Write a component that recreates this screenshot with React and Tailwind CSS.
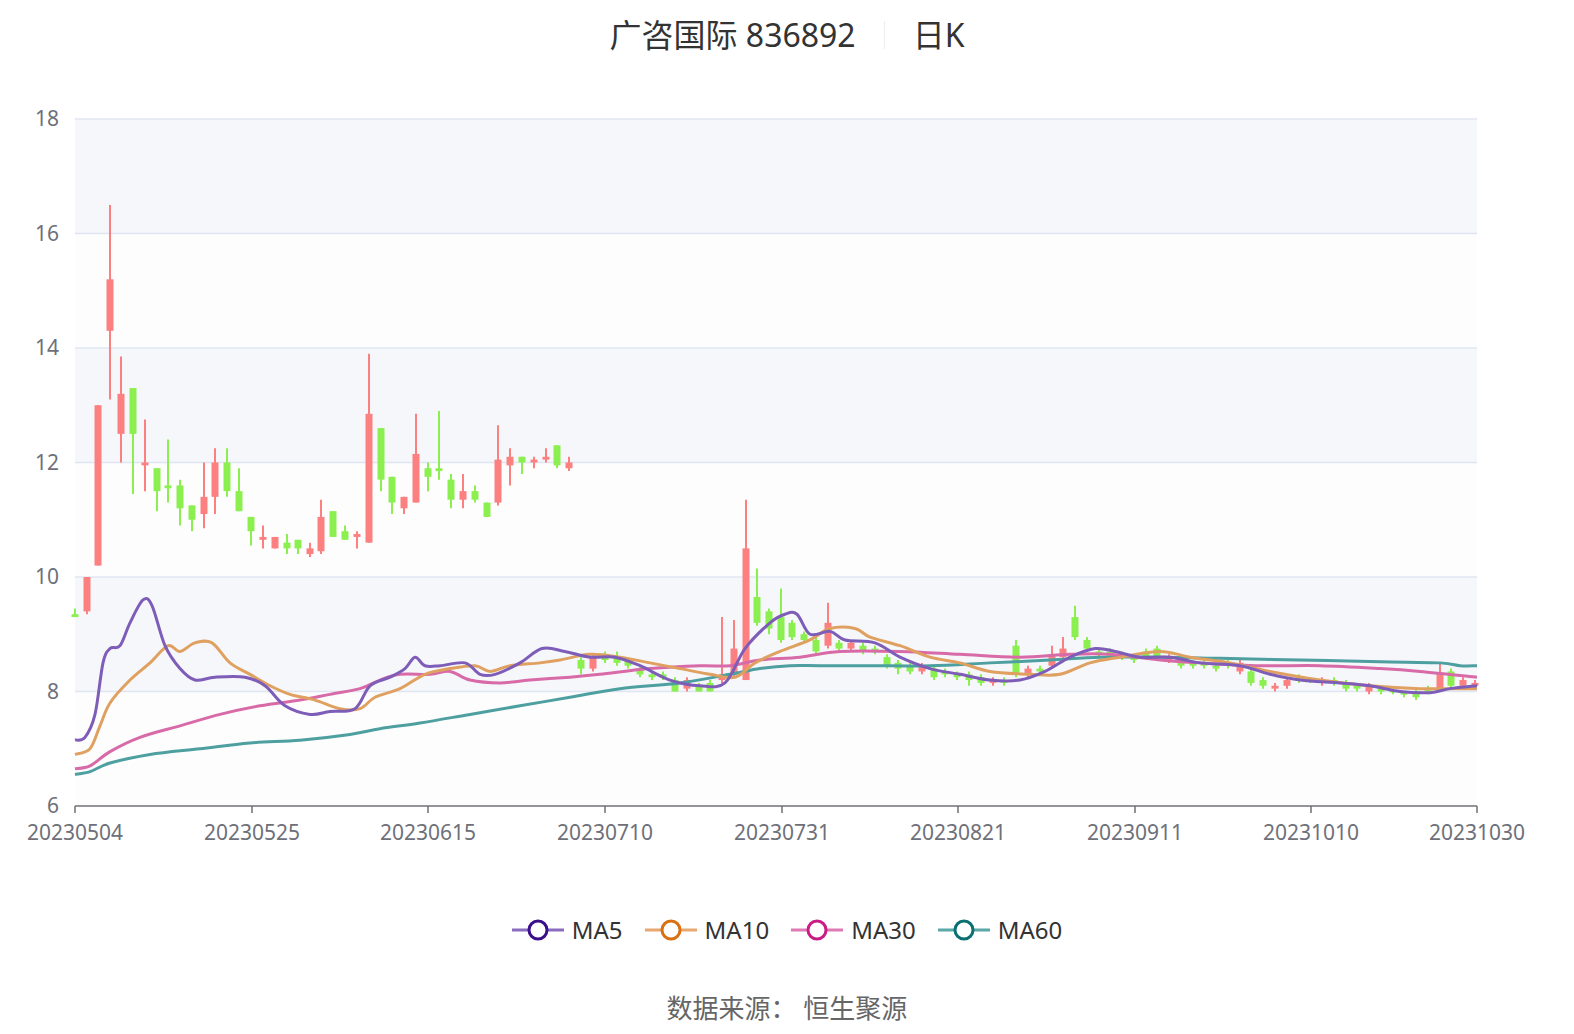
const Y = p => 806 - (p - 6) * 57.25;
const C = [
[75,9.35,9.3,9.45,9.3],[87,9.4,10.0,10.0,9.35],[98,10.2,13.0,13.0,10.2],[110,14.3,15.2,16.5,13.1],[121,12.5,13.2,13.85,12.0],
[133,13.3,12.5,13.3,11.45],[145,11.95,12.0,12.75,11.5],[157,11.9,11.5,11.9,11.15],[168,11.6,11.55,12.4,11.3],[180,11.6,11.2,11.7,10.9],
[192,11.25,11.0,11.25,10.8],[204,11.1,11.4,12.0,10.85],[215,11.4,12.0,12.25,11.1],[227,12.0,11.5,12.25,11.4],[239,11.5,11.15,11.9,11.15],
[251,11.05,10.8,11.05,10.55],[263,10.65,10.7,10.9,10.5],[275,10.5,10.7,10.7,10.5],[287,10.6,10.5,10.75,10.4],[298,10.65,10.5,10.65,10.4],
[310,10.4,10.5,10.6,10.35],[321,10.45,11.05,11.35,10.4],[333,11.15,10.7,11.15,10.7],[345,10.8,10.65,10.9,10.65],[357,10.7,10.75,10.8,10.5],
[369,10.6,12.85,13.9,10.6],[381,12.6,11.7,12.6,11.5],[392,11.75,11.3,11.75,11.1],[404,11.2,11.4,11.4,11.1],[416,11.3,12.15,12.85,11.3],
[428,11.9,11.75,12.0,11.5],[439,11.9,11.85,12.9,11.7],[451,11.7,11.35,11.8,11.2],[463,11.35,11.5,11.8,11.2],[475,11.5,11.35,11.6,11.3],
[487,11.3,11.05,11.3,11.05],[498,11.3,12.05,12.65,11.25],[510,11.95,12.1,12.25,11.6],[522,12.1,12.0,12.1,11.8],[534,12.0,12.05,12.1,11.9],
[546,12.05,12.1,12.25,12.0],[557,12.3,11.95,12.3,11.9],[569,11.9,12.0,12.1,11.85],
[581,8.55,8.4,8.6,8.3],[593,8.4,8.6,8.65,8.35],[605,8.65,8.55,8.7,8.5],[617,8.6,8.5,8.7,8.45],[628,8.55,8.45,8.6,8.4],[640,8.4,8.3,8.45,8.25],
[652,8.3,8.25,8.35,8.2],[663,8.3,8.25,8.35,8.2],[675,8.2,8.0,8.25,8.0],[687,8.05,8.2,8.25,8.0],[699,8.1,8.0,8.15,8.0],[710,8.15,8.0,8.2,8.0],
[722,8.2,8.3,9.3,8.15],[734,8.3,8.75,9.25,8.25],[746,8.2,10.5,11.35,8.2],[757,9.65,9.2,10.15,9.15],[769,9.4,9.1,9.45,9.0],[781,9.3,8.9,9.8,8.85],
[792,9.2,8.95,9.25,8.9],[804,9.0,8.9,9.05,8.85],[816,8.9,8.7,8.95,8.65],[828,8.8,9.2,9.55,8.75],[839,8.85,8.75,8.9,8.7],[851,8.75,8.85,8.9,8.7],
[863,8.8,8.7,8.85,8.65],[875,8.75,8.7,8.8,8.65],[887,8.6,8.45,8.65,8.4],[898,8.5,8.4,8.55,8.3],[910,8.45,8.35,8.5,8.3],[922,8.35,8.45,8.5,8.3],
[934,8.4,8.25,8.45,8.2],[945,8.35,8.3,8.4,8.25],[957,8.3,8.25,8.35,8.2],[969,8.3,8.2,8.35,8.1],[981,8.25,8.15,8.3,8.1],[993,8.15,8.2,8.25,8.1],
[1004,8.2,8.15,8.25,8.1],[1016,8.8,8.3,8.9,8.25],[1028,8.3,8.4,8.45,8.25],[1040,8.4,8.35,8.45,8.3],[1052,8.45,8.65,8.8,8.4],[1063,8.6,8.75,8.95,8.55],
[1075,9.3,8.95,9.5,8.9],[1087,8.9,8.75,8.95,8.7],[1099,8.7,8.65,8.75,8.6],[1110,8.7,8.6,8.75,8.55],[1122,8.65,8.6,8.7,8.55],[1134,8.6,8.55,8.65,8.5],
[1146,8.7,8.6,8.75,8.55],[1157,8.75,8.6,8.8,8.55],[1169,8.55,8.6,8.65,8.5],[1181,8.55,8.45,8.6,8.4],[1193,8.5,8.45,8.55,8.4],[1204,8.5,8.45,8.55,8.4],
[1216,8.45,8.4,8.5,8.35],[1228,8.5,8.45,8.55,8.4],[1240,8.35,8.5,8.55,8.3],[1251,8.35,8.15,8.4,8.1],[1263,8.2,8.1,8.25,8.05],[1275,8.05,8.1,8.15,8.0],
[1287,8.1,8.2,8.25,8.05],[1299,8.25,8.2,8.3,8.15],[1310,8.22,8.2,8.25,8.15],[1322,8.15,8.2,8.25,8.1],[1334,8.2,8.15,8.25,8.1],[1346,8.15,8.05,8.2,8.0],
[1357,8.1,8.05,8.15,8.0],[1369,8.0,8.1,8.15,7.95],[1381,8.05,8.0,8.1,7.95],[1393,8.02,8.0,8.05,7.95],[1404,7.98,7.95,8.0,7.9],[1416,8.0,7.9,8.05,7.85],
[1428,8.05,8.0,8.1,7.95],[1440,8.05,8.3,8.5,8.0],[1451,8.35,8.1,8.4,8.05],[1463,8.1,8.2,8.25,8.05],[1475,8.1,8.15,8.2,8.05]];

const MA5=[[75,7.15],[85,7.2],[95,7.6],[103,8.5],[110,8.75],[120,8.8],[130,9.2],[143,9.6],[152,9.5],[165,8.8],[180,8.4],[195,8.2],[215,8.25],[245,8.25],[265,8.1],[285,7.75],[310,7.6],[330,7.65],[355,7.7],[370,8.1],[390,8.25],[405,8.4],[415,8.6],[425,8.45],[440,8.45],[465,8.5],[480,8.3],[495,8.3],[520,8.5],[542,8.75],[565,8.7],[590,8.6],[615,8.6],[640,8.45],[670,8.2],[700,8.1],[725,8.15],[745,8.75],[770,9.2],[785,9.35],[797,9.35],[810,9.0],[830,9.05],[845,8.9],[875,8.85],[900,8.6],[930,8.4],[960,8.3],[990,8.2],[1020,8.2],[1045,8.35],[1070,8.6],[1095,8.75],[1115,8.7],[1140,8.6],[1170,8.6],[1200,8.5],[1240,8.45],[1270,8.3],[1300,8.2],[1340,8.15],[1370,8.1],[1400,8.0],[1430,7.98],[1450,8.05],[1477,8.1]];
const MA10=[[75,6.9],[90,7.0],[100,7.4],[110,7.8],[130,8.2],[150,8.5],[168,8.8],[180,8.7],[195,8.85],[212,8.85],[230,8.5],[250,8.3],[270,8.1],[290,7.95],[315,7.85],[340,7.7],[360,7.7],[375,7.9],[400,8.05],[425,8.3],[450,8.4],[475,8.45],[490,8.35],[510,8.45],[540,8.5],[560,8.55],[590,8.65],[620,8.6],[650,8.5],[680,8.4],[710,8.3],[735,8.25],[755,8.5],[780,8.7],[810,8.9],[830,9.1],[855,9.1],[870,8.95],[900,8.8],[930,8.6],[960,8.5],[990,8.35],[1030,8.3],[1060,8.3],[1090,8.5],[1120,8.6],[1160,8.7],[1190,8.6],[1230,8.5],[1270,8.35],[1320,8.2],[1370,8.1],[1420,8.05],[1477,8.05]];
const MA30=[[75,6.65],[90,6.7],[110,6.95],[140,7.2],[180,7.4],[220,7.6],[260,7.75],[300,7.85],[330,7.95],[360,8.05],[380,8.2],[400,8.3],[430,8.3],[450,8.35],[470,8.2],[500,8.15],[530,8.2],[570,8.25],[600,8.3],[650,8.4],[700,8.45],[730,8.45],[760,8.55],[800,8.6],[840,8.7],[900,8.7],[960,8.65],[1020,8.6],[1070,8.65],[1110,8.65],[1160,8.55],[1200,8.5],[1260,8.45],[1320,8.45],[1380,8.4],[1420,8.35],[1477,8.25]];
const MA60=[[75,6.55],[90,6.6],[110,6.75],[150,6.9],[200,7.0],[250,7.1],[300,7.15],[350,7.25],[380,7.35],[420,7.45],[470,7.6],[520,7.75],[570,7.9],[620,8.05],[680,8.15],[730,8.3],[760,8.4],[790,8.45],[820,8.45],[870,8.45],[930,8.45],[990,8.5],[1050,8.55],[1100,8.6],[1160,8.6],[1220,8.58],[1300,8.55],[1380,8.52],[1440,8.5],[1460,8.45],[1477,8.45]];

function smooth(pts){
  const P = pts.map(([x,p])=>[x,Y(p)]);
  let d = `M${P[0][0]},${P[0][1]}`;
  for(let i=0;i<P.length-1;i++){
    const p0=P[i-1]||P[i],p1=P[i],p2=P[i+1],p3=P[i+2]||p2;
    const c1=[p1[0]+(p2[0]-p0[0])/6,p1[1]+(p2[1]-p0[1])/6];
    const c2=[p2[0]-(p3[0]-p1[0])/6,p2[1]-(p3[1]-p1[1])/6];
    d+=` C${c1[0]},${c1[1]} ${c2[0]},${c2[1]} ${p2[0]},${p2[1]}`;
  }
  return d;
}

const dates=[[75,"20230504"],[252,"20230525"],[428,"20230615"],[605,"20230710"],[782,"20230731"],[958,"20230821"],[1135,"20230911"],[1311,"20231010"],[1477,"20231030"]];
const font = '"Noto Sans","Noto Sans CJK SC",sans-serif';

function Legend({line,ring,label}){
  return (
    <div className="flex items-center gap-[8px]">
      <svg width="52" height="24"><line x1="0" y1="12" x2="52" y2="12" stroke={line} strokeWidth="3"/><circle cx="26" cy="12" r="9" fill="white" stroke={ring} strokeWidth="3"/></svg>
      <span className="text-[24px] text-[#333]">{label}</span>
    </div>
  );
}

export default function App(){
  return (
    <div className="w-[1574px] h-[1034px] bg-white overflow-hidden" style={{fontFamily:font}}>
      <div className="h-[70px] flex items-center justify-center text-[32px] text-[#333]">
        <span>广咨国际 836892</span>
        <span className="mx-[28px] w-[1px] h-[28px] bg-[#eee]"></span>
        <span>日K</span>
      </div>
      <svg width="1574" height="810" viewBox="0 70 1574 810" style={{fontFamily:font}}>
        {[6,8,10,12,14,16].map((p,i)=>(
          <rect key={p} x="75" y={Y(p+2)} width="1402" height={Y(p)-Y(p+2)} fill={i%2? "#f5f7fb":"#fdfdfe"}/>
        ))}
        {[8,10,12,14,16,18].map(p=>(<line key={p} x1="75" x2="1477" y1={Y(p)} y2={Y(p)} stroke="#e0e6f1" strokeWidth="1.5"/>))}
        {[6,8,10,12,14,16,18].map(p=>(<text key={p} x="59" y={Y(p)+7} textAnchor="end" fontSize="21" fill="#6e7079">{p}</text>))}
        <line x1="75" x2="1477" y1="806" y2="806" stroke="#6e7079" strokeWidth="1.5"/>
        {dates.map(([x,t])=>(<g key={t}><line x1={x} x2={x} y1="806" y2="813" stroke="#6e7079" strokeWidth="1.5"/><text x={x} y="840" textAnchor="middle" fontSize="21" fill="#6e7079">{t}</text></g>))}
        {C.map(([x,o,c,h,l],i)=>{
          const up=c>=o, col=up?"#fd8080":"#8bf04f";
          const top=Y(Math.max(o,c)), bot=Y(Math.min(o,c));
          return <g key={i}><line x1={x} x2={x} y1={Y(h)} y2={Y(l)} stroke={col} strokeWidth="2"/><rect x={x-3.5} y={top} width="7" height={Math.max(bot-top,2)} fill={col}/></g>;
        })}
        <path d={smooth(MA60)} fill="none" stroke="#4e9fa0" strokeWidth="3"/>
        <path d={smooth(MA30)} fill="none" stroke="#d86aa8" strokeWidth="3"/>
        <path d={smooth(MA10)} fill="none" stroke="#dfa060" strokeWidth="3"/>
        <path d={smooth(MA5)} fill="none" stroke="#7e5db8" strokeWidth="3"/>
      </svg>
      <div className="h-[100px] flex items-center justify-center gap-[22px]">
        <Legend line="#8a6cc0" ring="#3d0e8a" label="MA5"/>
        <Legend line="#e8a870" ring="#d97012" label="MA10"/>
        <Legend line="#e07ab4" ring="#c91c86" label="MA30"/>
        <Legend line="#5aa8a8" ring="#0c6f72" label="MA60"/>
      </div>
      <div className="h-[56px] flex items-center justify-center text-[26px] text-[#666]">数据来源：&nbsp;恒生聚源</div>
    </div>
  );
}
